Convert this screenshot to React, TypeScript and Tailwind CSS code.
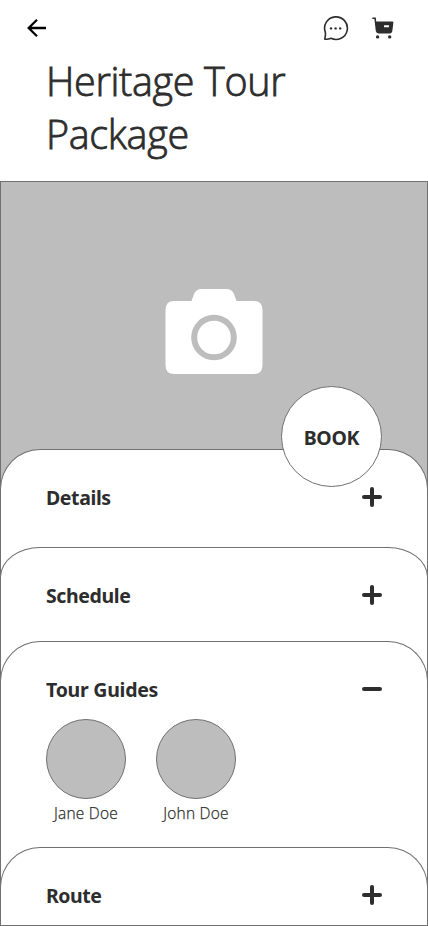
import type { ReactNode } from "react";

function ToggleIcon({ open = false }: { open?: boolean }) {
  return (
    <svg className="mb-0.5" width="20" height="20" viewBox="0 0 20 20" stroke="#2d2d2d" strokeWidth="4" strokeLinecap="round" aria-hidden="true">
      <path d="M2 10H18" />
      {!open && <path d="M10 2V18" />}
    </svg>
  );
}

type PanelProps = { title: string; size: string; spacing: string; open?: boolean; children?: ReactNode };

function Panel({ title, size, spacing, open, children }: PanelProps) {
  return (
    <section className={`-mx-px border border-b-0 border-[#707070] bg-white px-[45px] ${size}`}>
      <button className="flex h-[27px] w-full items-center justify-between text-left">
        <span className={`text-[19.5px] leading-[27px] font-bold ${spacing}`}>{title}</span>
        <ToggleIcon open={open} />
      </button>
      {children}
    </section>
  );
}

function Guide({ name }: { name: string }) {
  return (
    <div className="flex w-20 flex-col items-center">
      <div className="size-20 rounded-full border border-[#707070] bg-[#bdbdbd]" />
      <span className="mt-1 font-['Open_Sans','Noto_Sans',sans-serif] text-[15.5px] leading-[21px] font-light tracking-[0.2px] whitespace-nowrap [-webkit-text-stroke:0.25px_#2d2d2d]">{name}</span>
    </div>
  );
}

export default function App() {
  return (
    <main className="flex h-[926px] w-[428px] flex-col overflow-hidden bg-white font-['Noto_Sans','Open_Sans',sans-serif] text-[#2d2d2d]">
      <header className="h-[181px] shrink-0">
        <nav className="flex h-[55px] items-center justify-between pr-[34px] pl-[27px]">
          <button aria-label="Back">
            <svg width="20" height="20" viewBox="0 0 20 20" fill="none" stroke="#000" strokeWidth="2.3">
              <path d="M10 1.8L1.7 10L10 18.2M1.7 10H19" />
            </svg>
          </button>
          <div className="flex items-center gap-[23px]">
            <svg width="26" height="26" viewBox="0 0 26 26" fill="none" stroke="#2d2d2d" strokeWidth="1.6">
              <path d="M2.2 16.8A11.4 11.3 0 1 1 8 23.3C5.8 24.2 3.8 24.5 1.8 24.1C1.8 22.4 3.1 20 2.2 16.8Z" strokeLinejoin="round" />
              <g fill="#2d2d2d" stroke="none">
                <circle cx="8" cy="13.4" r="1.2" />
                <circle cx="12.6" cy="13.4" r="1.2" />
                <circle cx="17.2" cy="13.4" r="1.2" />
              </g>
            </svg>
            <svg width="22" height="22" viewBox="0 0 22 22">
              <path d="M.3 .6H3.8L4.2 4.4H20.4Q21.5 4.4 21.4 5.5L20.3 14.3Q20 16.4 18 16.4H6.5Q4.2 16.4 3.8 14.1L2.4 2.1H.3Z" fill="#2d2d2d" />
              <rect x="12" y="8.2" width="5" height="2" rx=".3" fill="#fff" />
              <circle cx="5.6" cy="19.9" r="1.7" fill="#2d2d2d" />
              <circle cx="17.7" cy="19.9" r="1.7" fill="#2d2d2d" />
            </svg>
          </div>
        </nav>
        <h1 className="pl-[46px] font-['Open_Sans','Noto_Sans',sans-serif] text-[39.5px] leading-[53px] font-light tracking-[-0.33px] [-webkit-text-stroke:0.8px_#2d2d2d]">
          Heritage Tour<br />Package
        </h1>
      </header>
      <div className="relative flex h-[745px] flex-col border border-[#707070]">
        <div className="-mb-[41px] flex h-[308px] shrink-0 justify-center bg-[#bdbdbd] pt-[107px]">
          <svg width="98" height="86" viewBox="0 0 98 86" aria-hidden="true">
            <path d="M9 12H26.5L29 5Q31 0 37 0H61Q67 0 69 5L71.5 12H89Q97.5 12 97.5 21V76Q97.5 85 89 85H9Q.5 85 .5 76V21Q.5 12 9 12Z" fill="#fff" />
            <circle cx="49" cy="48.5" r="19.8" fill="none" stroke="#bdbdbd" strokeWidth="6" />
          </svg>
        </div>
        <Panel title="Details" size="h-[98px] shrink-0 rounded-t-[40px] pt-[34px]" spacing="tracking-[-0.4px]" />
        <Panel title="Schedule" size="h-[94px] shrink-0 rounded-t-[40px_30px] pt-[34px]" spacing="tracking-[-0.4px]" />
        <Panel title="Tour Guides" size="h-[206px] shrink-0 rounded-t-[40px] pt-[34px]" spacing="tracking-[-0.25px]" open>
          <div className="mt-4 flex gap-[30px]">
            <Guide name="Jane Doe" />
            <Guide name="John Doe" />
          </div>
        </Panel>
        <Panel title="Route" size="h-[78px] shrink-0 rounded-t-[40px] pt-[34px]" spacing="tracking-[-0.45px]" />
        <button className="absolute top-[204px] left-[280px] flex size-[101px] items-center justify-center rounded-full border border-[#707070] bg-white pt-0.5 text-[19.5px] leading-[27px] font-bold tracking-[-0.3px]">
          BOOK
        </button>
      </div>
    </main>
  );
}
